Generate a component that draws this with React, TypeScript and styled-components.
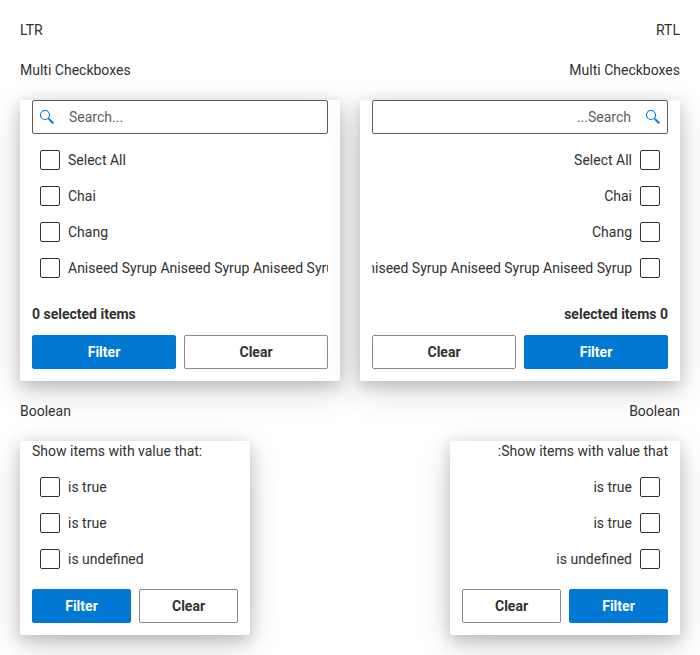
import React from "react";
import styled, { createGlobalStyle } from "styled-components";

const GlobalStyle = createGlobalStyle`
  *, *::before, *::after { box-sizing: border-box; }
  html, body { margin: 0; background: #fff; overflow: hidden; }
`;

const Page = styled.main`
  width: 700px;
  height: 655px;
  padding: 20px;
  display: flex;
  justify-content: space-between;
  overflow: hidden;
  font: 14px/20px Roboto, sans-serif;
  color: #323130;
`;

const Column = styled.section`
  width: 320px;
  display: flex;
  flex-direction: column;
  align-items: flex-start;
`;

const Title = styled.div`
  margin-bottom: 20px;
`;

const Card = styled.div<{ $width: number; $height: number; $gap?: number }>`
  width: ${(p) => p.$width}px;
  height: ${(p) => p.$height}px;
  margin-bottom: ${(p) => p.$gap ?? 0}px;
  padding: 0 12px;
  flex-shrink: 0;
  display: flex;
  flex-direction: column;
  background: #fff;
  border-radius: 2px;
  box-shadow: 0 10px 36px rgba(0, 0, 0, 0.16), 0 4.8px 14.4px rgba(0, 0, 0, 0.18);
`;

const SearchBox = styled.label`
  height: 34px;
  display: flex;
  align-items: center;
  border: 1px solid #605e5c;
  border-radius: 2px;
  padding-inline-start: 6px;
  gap: 14px;
`;

const SearchInput = styled.input`
  flex: 1;
  min-width: 0;
  padding: 0;
  border: 0;
  outline: 0;
  background: transparent;
  font: inherit;
  color: inherit;
  &::placeholder { color: #605e5c; opacity: 1; }
`;

const List = styled.div`
  margin-top: 8px;
  overflow: hidden;
`;

const Option = styled.label`
  height: 36px;
  padding: 0 8px;
  display: flex;
  align-items: center;
  gap: 8px;
  white-space: nowrap;
`;

const Box = styled.input.attrs({ type: "checkbox" })`
  appearance: none;
  flex: 0 0 20px;
  width: 20px;
  height: 20px;
  margin: 0;
  border: 1px solid #323130;
  border-radius: 2px;
`;

const Count = styled.div`
  margin-top: 18px;
  font-weight: 700;
`;

const Message = styled.div`
  white-space: nowrap;
`;

const Actions = styled.div<{ $top: number }>`
  margin-top: ${(p) => p.$top}px;
  display: flex;
  gap: 8px;
`;

const Button = styled.button<{ $primary?: boolean }>`
  flex: 1;
  height: 34px;
  padding: 0;
  border: 1px solid ${(p) => (p.$primary ? "#0078d4" : "#8a8886")};
  border-radius: 2px;
  background: ${(p) => (p.$primary ? "#0078d4" : "#fff")};
  color: ${(p) => (p.$primary ? "#fff" : "#323130")};
  font: inherit;
  font-weight: 700;
`;

const SearchIcon = () => (
  <svg width="16" height="16" viewBox="0 0 16 16" fill="none" stroke="#0078d4">
    <circle cx="6" cy="6" r="4.5" strokeWidth="1.15" />
    <path d="M9.1 9.1L10.6 10.6" strokeWidth="1.2" />
    <path d="M10 10L14.4 14.4" strokeWidth="2" />
  </svg>
);

const Options = ({ items }: { items: string[] }) => (
  <List>
    {items.map((item, i) => (
      <Option key={i}><Box />{item}</Option>
    ))}
  </List>
);

const Buttons = ({ top }: { top: number }) => (
  <Actions $top={top}>
    <Button $primary>Filter</Button>
    <Button>Clear</Button>
  </Actions>
);

const Demo = ({ dir }: { dir: "ltr" | "rtl" }) => (
  <Column dir={dir}>
    <Title>{dir.toUpperCase()}</Title>
    <Title>Multi Checkboxes</Title>
    <Card $width={320} $height={281} $gap={20}>
      <SearchBox><SearchIcon /><SearchInput placeholder="Search..." /></SearchBox>
      <Options items={["Select All", "Chai", "Chang", "Aniseed Syrup Aniseed Syrup Aniseed Syrup"]} />
      <Count>0 selected items</Count>
      <Buttons top={11} />
    </Card>
    <Title>Boolean</Title>
    <Card $width={230} $height={194}>
      <Message>Show items with value that:</Message>
      <Options items={["is true", "is true", "is undefined"]} />
      <Buttons top={12} />
    </Card>
  </Column>
);

export default function App() {
  return (
    <>
      <GlobalStyle />
      <Page><Demo dir="ltr" /><Demo dir="rtl" /></Page>
    </>
  );
}
